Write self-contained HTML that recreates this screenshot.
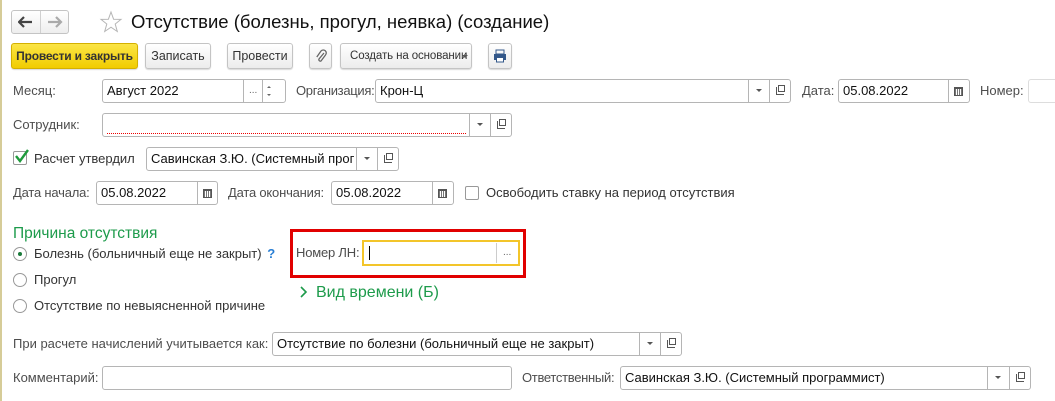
<!DOCTYPE html>
<html><head><meta charset="utf-8"><style>
*{box-sizing:border-box;margin:0;padding:0}
body{width:1055px;height:401px;background:#fff;position:relative;overflow:hidden;font-family:"Liberation Sans",Arial,sans-serif;font-size:13px;color:#4d4d4d}
.a{position:absolute}
.lbl{position:absolute;white-space:nowrap;line-height:14px}
.f{position:absolute;height:24px;border:1px solid #b5b5b5;border-radius:3px;background:#fff;color:#111;font-size:13px;line-height:22px;padding-left:4px;white-space:nowrap;overflow:hidden}
.sep{position:absolute;top:0;bottom:0;border-left:1px solid #b5b5b5}
.btn{position:absolute;height:26px;border:1px solid #c4c4c4;border-radius:3px;background:linear-gradient(#fff,#ececec);color:#333;font-size:12.5px;line-height:24px;text-align:center;white-space:nowrap;box-shadow:0 1px 1px rgba(0,0,0,.15)}
.dd{position:absolute;top:9px;width:0;height:0;border-left:3px solid transparent;border-right:3px solid transparent;border-top:3px solid #555}
.op{position:absolute;top:6px;width:8px;height:8px;border:1px solid #555}
.op2{position:absolute;top:9px;width:8px;height:8px;border-left:1px solid #555;border-bottom:1px solid #555}
.cal{position:absolute;top:7px;width:9px;height:9px;border:1px solid #555;border-top-width:2px;background:repeating-linear-gradient(90deg,#777 0 1px,#fff 1px 2px)}
.rad{position:absolute;width:14px;height:14px;border:1px solid #999;border-radius:50%;background:#fff}
.cb{position:absolute;width:14px;height:14px;border:1px solid #999;border-radius:2px;background:#fff}
</style></head><body>
<div class="a" style="left:0;top:0;width:2px;height:401px;background:#d6cc98"></div>

<!-- nav -->
<div class="a" style="left:11px;top:10px;width:58px;height:24px;border:1px solid #c4c4c4;border-radius:3px;background:linear-gradient(#fff,#eee)"></div>
<div class="a" style="left:40px;top:11px;width:1px;height:22px;background:#d0d0d0"></div>
<svg class="a" style="left:18px;top:16px" width="16" height="12"><path d="M1 6H14M6 1L1 6L6 11" stroke="#444" stroke-width="2.2" fill="none"/></svg>
<svg class="a" style="left:47px;top:16px" width="16" height="12"><path d="M1 6H14M9 1L14 6L9 11" stroke="#aaa" stroke-width="2.2" fill="none"/></svg>
<svg class="a" style="left:99px;top:10px" width="24" height="24"><path d="M12 2L14.6 9.2 22 9.4 16.2 14 18.3 21.5 12 17.2 5.7 21.5 7.8 14 2 9.4 9.4 9.2Z" fill="none" stroke="#b5b5b5" stroke-width="1"/></svg>
<div class="lbl" style="left:131px;top:11px;font-size:18.5px;line-height:22px;color:#111">Отсутствие (болезнь, прогул, неявка) (создание)</div>

<!-- buttons -->
<div class="btn" style="left:11px;top:43px;width:127px;background:linear-gradient(#fbe545,#f1cc00);border-color:#d4b000;color:#333;font-weight:bold;font-size:12px;letter-spacing:-0.2px">Провести и закрыть</div>
<div class="btn" style="left:145px;top:43px;width:66px">Записать</div>
<div class="btn" style="left:227px;top:43px;width:66px">Провести</div>
<div class="btn" style="left:309px;top:43px;width:23px"><svg style="margin-top:5px" width="12" height="14"><path d="M9 4L4 10A1.5 1.5 0 0 0 6 12L10.5 6A3 3 0 0 0 6 2L1.8 8" fill="none" stroke="#666" stroke-width="1.3"/></svg></div>
<div class="btn" style="left:340px;top:43px;width:132px;text-align:left;padding-left:9px;font-size:11.5px;letter-spacing:-0.1px">Создать на основании<span class="dd" style="left:121px;top:11px"></span></div>
<div class="btn" style="left:488px;top:43px;width:24px"><svg style="margin-top:5px" width="14" height="14"><rect x="3" y="1" width="8" height="4" fill="none" stroke="#33588a"/><rect x="1" y="5" width="12" height="6" fill="#33588a"/><rect x="3.5" y="8.5" width="7" height="4.5" fill="#fff" stroke="#33588a"/></svg></div>

<!-- row 1 -->
<div class="lbl" style="left:13px;top:84px">Месяц:</div>
<div class="f" style="left:102px;top:79px;width:184px">Август 2022<div class="sep" style="left:140px"></div><div class="a" style="left:146px;top:0;color:#666;font-size:10px">...</div><div class="sep" style="left:159px"></div><div class="a" style="left:164px;top:6px;border-left:2px solid transparent;border-right:2px solid transparent;border-bottom:2px solid #666"></div><div class="a" style="left:164px;top:14px;border-left:2px solid transparent;border-right:2px solid transparent;border-top:2px solid #666"></div></div>
<div class="lbl" style="left:296px;top:84px;letter-spacing:-0.3px">Организация:</div>
<div class="f" style="left:375px;top:79px;width:416px">Крон-Ц<div class="sep" style="left:372px"></div><span class="dd" style="left:380px"></span><div class="sep" style="left:393px"></div><span class="op" style="left:402px;top:5px;width:7px;height:7px"></span><span class="op2" style="left:400px;top:7px"></span></div>
<div class="lbl" style="left:802px;top:84px">Дата:</div>
<div class="f" style="left:838px;top:79px;width:132px">05.08.2022<div class="sep" style="left:109px"></div><span class="cal" style="left:115px"></span></div>
<div class="lbl" style="left:980px;top:84px">Номер:</div>
<div class="f" style="left:1028px;top:79px;width:40px;border-color:#ddd"></div>

<!-- row 2 -->
<div class="lbl" style="left:13px;top:118px">Сотрудник:</div>
<div class="f" style="left:102px;top:113px;width:410px"><div class="a" style="left:4px;top:19px;width:359px;border-top:1px dotted #e00"></div><div class="sep" style="left:366px"></div><span class="dd" style="left:374px"></span><div class="sep" style="left:387px"></div><span class="op" style="left:396px;top:5px;width:7px;height:7px"></span><span class="op2" style="left:394px;top:7px"></span></div>

<!-- row 3 -->
<div class="cb" style="left:13px;top:151px"></div>
<svg class="a" style="left:14px;top:148px" width="16" height="16"><path d="M2 8L6 13L14 2" fill="none" stroke="#1f9a3c" stroke-width="2.4"/></svg>
<div class="lbl" style="left:34px;top:152px;color:#333">Расчет утвердил</div>
<div class="f" style="left:146px;top:147px;width:253px">Савинская З.Ю. (Системный прог<div class="sep" style="left:209px"></div><span class="dd" style="left:217px"></span><div class="sep" style="left:230px"></div><span class="op" style="left:239px;top:5px;width:7px;height:7px"></span><span class="op2" style="left:237px;top:7px"></span></div>

<!-- row 4 -->
<div class="lbl" style="left:13px;top:186px;letter-spacing:-0.2px">Дата начала:</div>
<div class="f" style="left:96px;top:181px;width:122px">05.08.2022<div class="sep" style="left:100px"></div><span class="cal" style="left:106px"></span></div>
<div class="lbl" style="left:228px;top:186px;letter-spacing:-0.2px">Дата окончания:</div>
<div class="f" style="left:331px;top:181px;width:123px">05.08.2022<div class="sep" style="left:100px"></div><span class="cal" style="left:106px"></span></div>
<div class="cb" style="left:465px;top:186px"></div>
<div class="lbl" style="left:486px;top:186px;color:#333">Освободить ставку на период отсутствия</div>

<!-- reason -->
<div class="lbl" style="left:13px;top:225px;font-size:15.5px;line-height:18px;color:#1d9b4b">Причина отсутствия</div>
<div class="rad" style="left:13px;top:247px"><div class="a" style="left:4px;top:4px;width:4px;height:4px;border-radius:50%;background:#1a7a3a"></div></div>
<div class="lbl" style="left:34px;top:247px;color:#333">Болезнь (больничный еще не закрыт) <span style="color:#2a7fd4;font-weight:bold;margin-left:2px">?</span></div>
<div class="rad" style="left:13px;top:273px"></div>
<div class="lbl" style="left:34px;top:273px;color:#333">Прогул</div>
<div class="rad" style="left:13px;top:299px"></div>
<div class="lbl" style="left:34px;top:299px;color:#333">Отсутствие по невыясненной причине</div>

<div class="a" style="left:290px;top:229px;width:236px;height:49px;border:3px solid #e10000"></div>
<div class="lbl" style="left:296px;top:246px;letter-spacing:-0.2px">Номер ЛН:</div>
<div class="f" style="left:362px;top:240px;width:158px;height:26px;border:2px solid #f3c52a;border-radius:0"><div class="a" style="left:5px;top:4px;width:1px;height:14px;background:#000"></div><div class="sep" style="left:132px;top:1px;bottom:1px;border-color:#ccc"></div><div class="a" style="left:139px;top:0;color:#666;font-size:10px">...</div></div>
<svg class="a" style="left:300px;top:286px" width="8" height="12"><path d="M1 1L6 6L1 11" fill="none" stroke="#1d9b4b" stroke-width="1.6"/></svg>
<div class="lbl" style="left:316px;top:284px;font-size:16px;line-height:18px;color:#1d9b4b">Вид времени (Б)</div>

<!-- bottom -->
<div class="lbl" style="left:13px;top:337px">При расчете начислений учитывается как:</div>
<div class="f" style="left:272px;top:332px;width:410px">Отсутствие по болезни (больничный еще не закрыт)<div class="sep" style="left:366px"></div><span class="dd" style="left:374px"></span><div class="sep" style="left:387px"></div><span class="op" style="left:396px;top:5px;width:7px;height:7px"></span><span class="op2" style="left:394px;top:7px"></span></div>
<div class="lbl" style="left:13px;top:371px">Комментарий:</div>
<div class="f" style="left:102px;top:366px;width:410px"></div>
<div class="lbl" style="left:522px;top:371px;letter-spacing:-0.3px">Ответственный:</div>
<div class="f" style="left:620px;top:366px;width:411px">Савинская З.Ю. (Системный программист)<div class="sep" style="left:366px"></div><span class="dd" style="left:374px"></span><div class="sep" style="left:388px"></div><span class="op" style="left:397px;top:5px;width:7px;height:7px"></span><span class="op2" style="left:395px;top:7px"></span></div>
</body></html>
